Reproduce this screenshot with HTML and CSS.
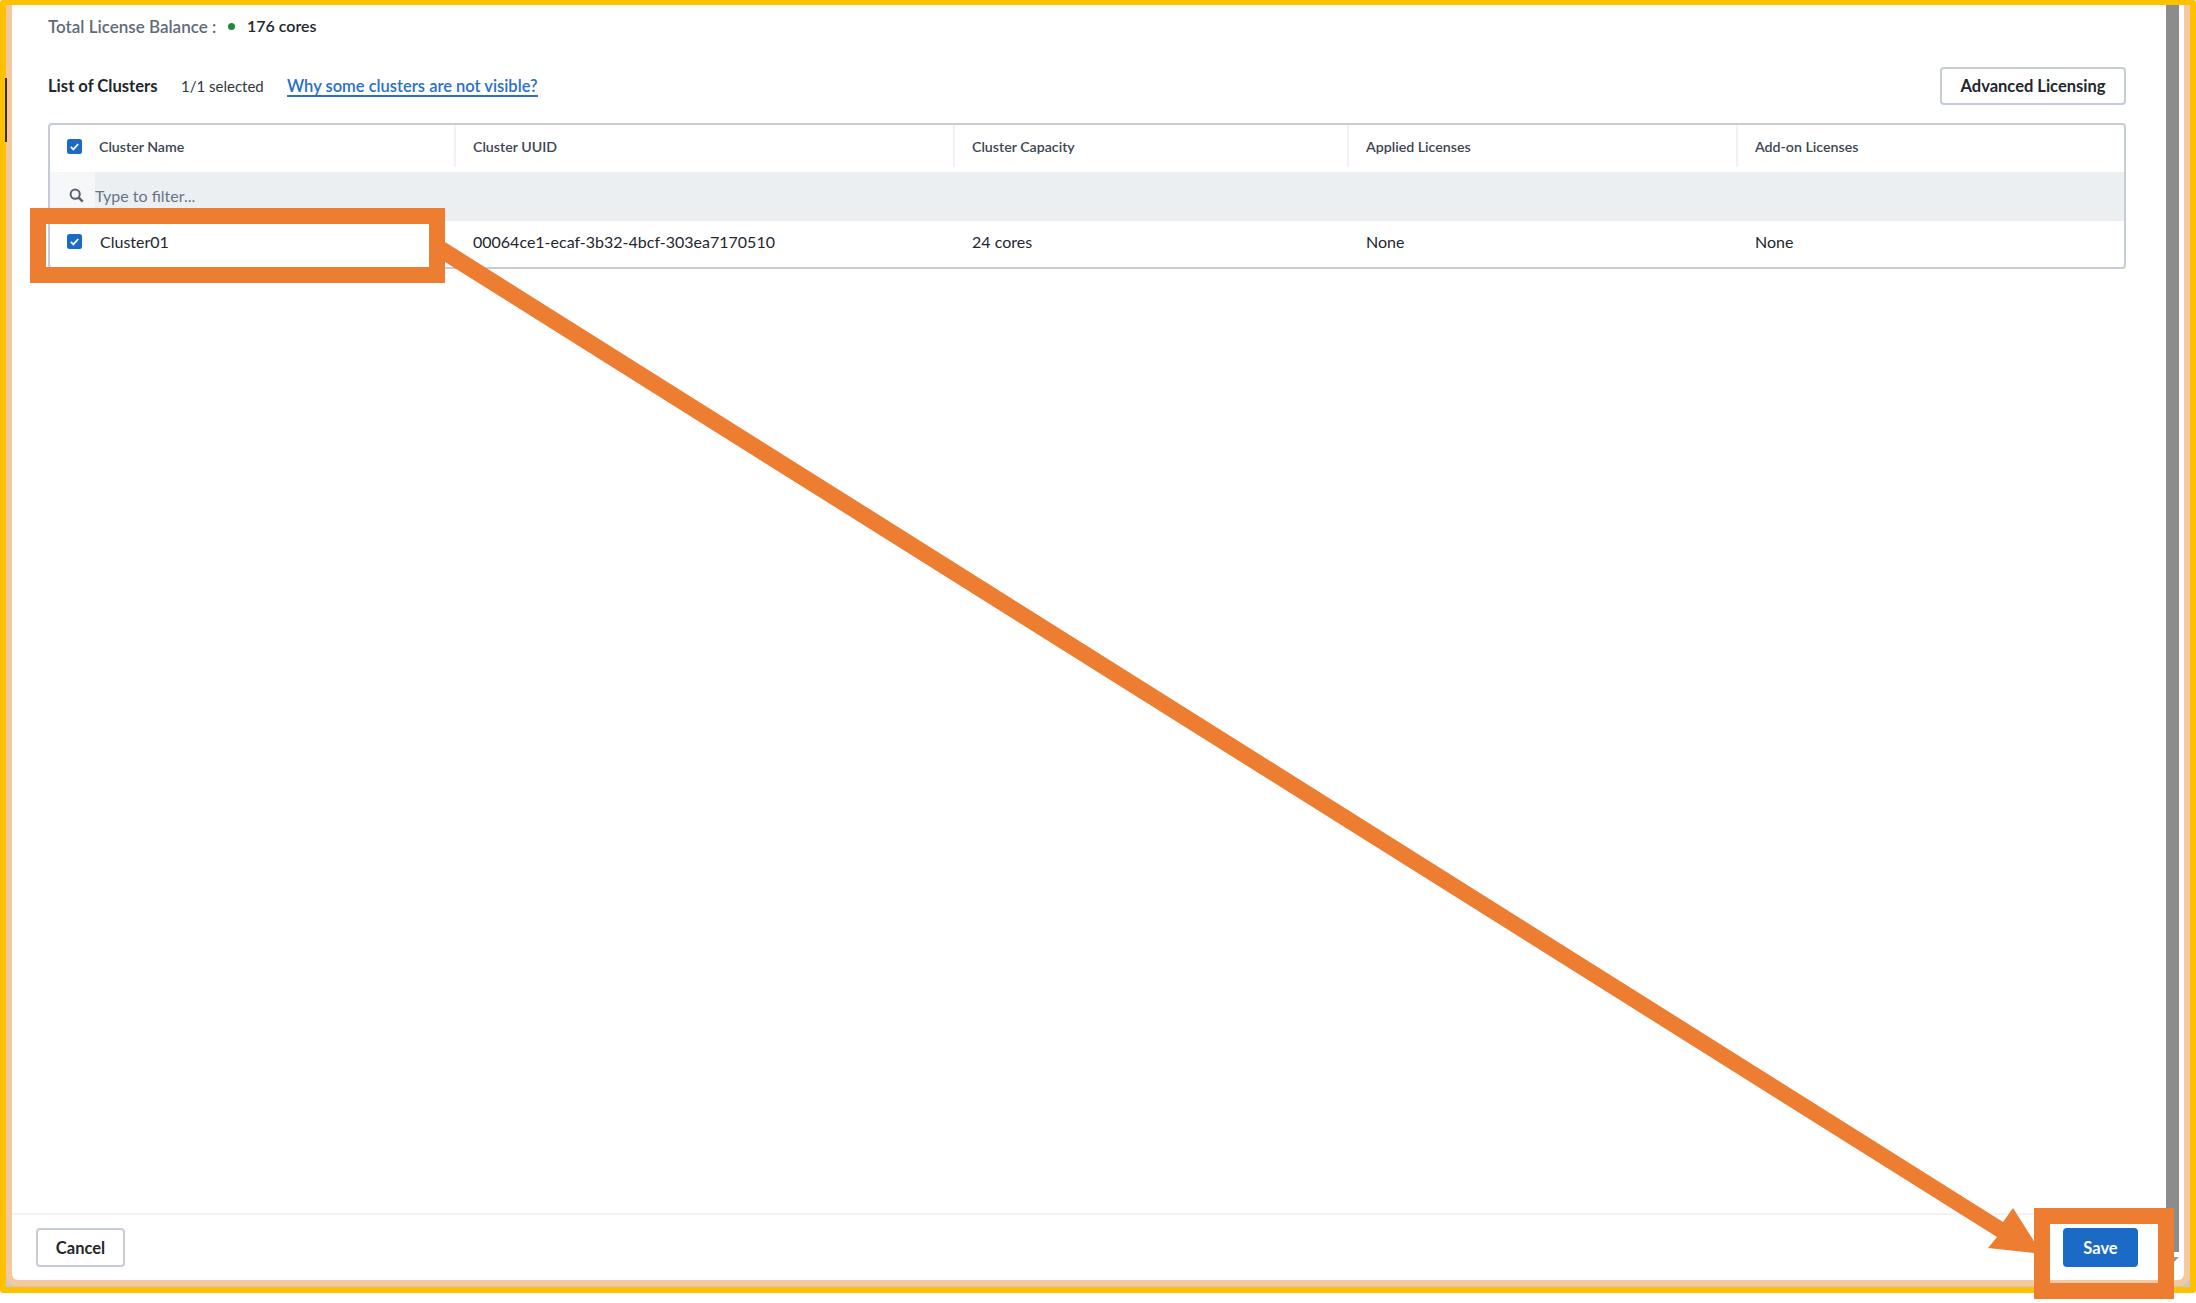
FILE: index.html
```html
<!DOCTYPE html>
<html lang="en">
<head>
    <meta charset="UTF-8">
    <meta name="viewport" content="width=device-width, initial-scale=1.0">
    <title>List of Clusters</title>
    <link rel="stylesheet" href="styles.css">
</head>
<body>
    <div class="frame">
        <div class="modal">
            <div class="content">
                <main class="main">
                    <div class="balance">
                        <span class="balance-label">Total License Balance :</span>
                        <span class="dot"></span>
                        <span class="balance-value">176 cores</span>
                    </div>
                    <div class="list-head">
                        <strong class="list-title">List of Clusters</strong>
                        <span class="list-count">1/1 selected</span>
                        <a class="list-link" href="#">Why some clusters are not visible?</a>
                        <button class="btn btn-advanced">Advanced Licensing</button>
                    </div>
                    <div class="table">
                        <div class="row row-head">
                            <div class="cell cell-check">
                                <svg class="check" viewBox="0 0 15 15"><rect width="15" height="15" rx="2.5" fill="#1b6ac6"/><path d="M3.8 7.8l2.6 2.6 4.8-5.4" fill="none" stroke="#fff" stroke-width="1.8"/></svg>
                                <span>Cluster Name</span>
                            </div>
                            <div class="cell">Cluster UUID</div>
                            <div class="cell">Cluster Capacity</div>
                            <div class="cell">Applied Licenses</div>
                            <div class="cell">Add-on Licenses</div>
                        </div>
                        <div class="filter">
                            <div class="filter-icon">
                                <svg width="15" height="15" viewBox="0 0 15 15"><circle cx="6.2" cy="6.2" r="4.6" fill="none" stroke="#56616e" stroke-width="2"/><path d="M9.7 9.7l4 4" stroke="#56616e" stroke-width="2.4"/></svg>
                            </div>
                            <div class="filter-text">Type to filter...</div>
                        </div>
                        <div class="row row-data">
                            <div class="cell cell-check">
                                <svg class="check" viewBox="0 0 15 15"><rect width="15" height="15" rx="2.5" fill="#1b6ac6"/><path d="M3.8 7.8l2.6 2.6 4.8-5.4" fill="none" stroke="#fff" stroke-width="1.8"/></svg>
                                <span>Cluster01</span>
                            </div>
                            <div class="cell">00064ce1-ecaf-3b32-4bcf-303ea7170510</div>
                            <div class="cell">24 cores</div>
                            <div class="cell">None</div>
                            <div class="cell">None</div>
                        </div>
                    </div>
                </main>
                <footer class="footer">
                    <button class="btn btn-cancel">Cancel</button>
                    <button class="btn btn-save">Save</button>
                </footer>
            </div>
            <div class="scrollbar">
                <div class="scroll-thumb"></div>
                <div class="scroll-arrow"></div>
            </div>
        </div>
    </div>

    <div class="mark"></div>
    <div class="callout callout-row"></div>
    <div class="callout callout-save"></div>
    <svg class="arrow" width="2196" height="1303" viewBox="0 0 2196 1303">
        <polygon points="445,242 2003,1222 2013,1208 2042,1254 1988,1248 1997,1237 445,262" fill="#ed7d31"/>
    </svg>
</body>
</html>
```

FILE: styles.css
```css
* {
    box-sizing: border-box;
}
body {
    margin: 0;
    height: 1303px;
    background-color: #fff;
    font-family: 'Lato', sans-serif;
    font-size: 16px;
    color: #22272e;
    overflow: hidden;
    position: relative;
}
.frame {
    height: 1293px;
    border: 6px solid #ffc000;
    border-top-width: 5px;
    border-radius: 3px;
    background-color: #c9c9c9;
}
.modal {
    height: 1281px;
    display: flex;
    background-color: #fff;
    border: 6px solid #f4c9a0;
    border-top: none;
    border-radius: 0 0 12px 12px;
}
.content {
    flex: 1;
    display: flex;
    flex-direction: column;
}
.main {
    flex: 1;
    padding: 11px 40px 0 36px;
}
.balance {
    display: flex;
    align-items: center;
    height: 20px;
}
.balance-label {
    color: #5f6b7a;
    font-weight: 600;
    font-size: 17px;
    width: 180px;
}
.dot {
    width: 7px;
    height: 7px;
    border-radius: 50%;
    background-color: #1d8a3e;
}
.balance-value {
    margin: 0 0 2px 12px;
    font-weight: 600;
    font-size: 16px;
    color: #22272e;
}
.list-head {
    display: flex;
    align-items: center;
    margin-top: 31px;
    height: 38px;
}
.list-title {
    width: 133px;
    font-weight: 700;
    font-size: 16.6px;
}
.list-count {
    width: 106px;
    font-size: 15px;
    color: #30363e;
}
.list-link {
    font-size: 16.5px;
    color: #2a6fc9;
    font-weight: 600;
    text-decoration: none;
    border-bottom: 2px solid #2a6fc9;
    line-height: 17px;
    margin-top: 2px;
}
.btn {
    font-family: inherit;
    font-size: 16.5px;
    font-weight: 700;
    height: 39px;
    border-radius: 4px;
    background-color: #fff;
    border: 2px solid #c5cbd8;
    color: #22272e;
    cursor: pointer;
    padding: 0;
}
.btn-advanced {
    margin-left: auto;
    width: 186px;
    height: 38px;
}
.table {
    margin-top: 18px;
    border: 2px solid #c5cbd8;
    border-radius: 4px;
    overflow: hidden;
}
.row {
    display: grid;
    grid-template-columns: 404px 499px 394px 389px 1fr;
    align-items: stretch;
}
.row-head {
    height: 47px;
    padding-bottom: 5px;
    font-size: 14.2px;
    font-weight: 600;
    color: #3c4652;
}
.row-data {
    height: 46px;
    padding-bottom: 5px;
    font-size: 16px;
}
.cell {
    display: flex;
    align-items: center;
    padding-left: 18px;
}
.row-data .cell {
    padding-left: 19px;
}
.row-head .cell + .cell {
    border-left: 2px solid #f0f2f5;
    padding-left: 17px;
}
.row .cell-check {
    padding-left: 17px;
    gap: 17px;
}
.row-data .cell-check {
    gap: 18px;
}
.check {
    width: 15px;
    height: 15px;
}
.filter {
    display: flex;
    height: 49px;
    background-color: #ebeff2;
}
.filter-icon {
    width: 45px;
    padding: 15px 0 0 19px;
    background-color: #f5f7f9;
}
.filter-text {
    padding-top: 14px;
    font-size: 16px;
    color: #687585;
}
.footer {
    height: 67px;
    display: flex;
    align-items: center;
    justify-content: space-between;
    padding: 0 28px 0 24px;
    border-top: 2px solid #f0f3f5;
}
.btn-cancel {
    width: 89px;
}
.btn-save {
    width: 75px;
    background-color: #1b6ac6;
    border-color: #1b6ac6;
    color: #fff;
}
.scrollbar {
    width: 18px;
    padding-right: 5px;
}
.scroll-thumb {
    height: 1247px;
    background-color: #8c8c8c;
}
.scroll-arrow {
    width: 0;
    height: 0;
    margin: 5px 0 0 3px;
    border-left: 5px solid transparent;
    border-right: 5px solid transparent;
    border-top: 5px solid #9a9a9a;
}
/* annotations drawn on top of the screenshot */
.callout {
    position: absolute;
    border: 16px solid #ed7d31;
}
.callout-row {
    left: 30px;
    top: 208px;
    width: 415px;
    height: 75px;
}
.callout-save {
    left: 2034px;
    top: 1208px;
    width: 140px;
    height: 91px;
}
.arrow {
    position: absolute;
    left: 0;
    top: 0;
}
.mark {
    position: absolute;
    left: 5px;
    top: 78px;
    width: 2px;
    height: 64px;
    background-color: #3a3026;
}
```
